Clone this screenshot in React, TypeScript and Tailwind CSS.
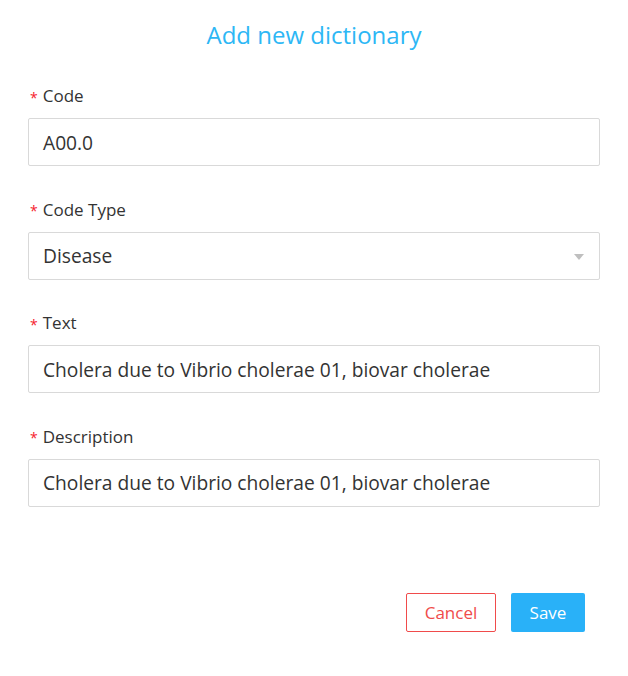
import React from "react";

const fields = [
  { label: "Code", value: "A00.0" },
  { label: "Code Type", value: "Disease", select: true },
  { label: "Text", value: "Cholera due to Vibrio cholerae 01, biovar cholerae" },
  { label: "Description", value: "Cholera due to Vibrio cholerae 01, biovar cholerae" },
];

const App: React.FC = () => {
  return (
    <div
      className="w-[628px] h-[676px] bg-white px-[28px] pt-[19px]"
      style={{ fontFamily: '"Open Sans", "Noto Sans", sans-serif' }}
    >
      <h1 className="text-center text-[24px] leading-[31px] text-[#2db7f5]">Add new dictionary</h1>

      <div className="mt-[34px] flex flex-col gap-[31.6px]">
        {fields.map((f) => (
          <div key={f.label} className="flex flex-col gap-[10px]">
            <label className="flex items-center h-[24px] text-[17px] text-[#333]">
              <span className="text-[#f5222d] text-[14px] ml-[2px] mr-[5px] mt-[2px]">*</span>
              {f.label}
            </label>
            <div className="relative h-[48px] border border-[#d9d9d9] rounded-[2px] flex items-center pl-[14px] pt-[2px] text-[19.2px] text-[#333]">
              {f.value}
              {f.select && (
                <svg
                  className="absolute right-[15px] top-[21px]"
                  width="10"
                  height="6"
                  viewBox="0 0 10 6"
                >
                  <path d="M0 0 L10 0 L5 6 Z" fill="#bfbfbf" />
                </svg>
              )}
            </div>
          </div>
        ))}
      </div>

      <div className="mt-[86px] flex justify-end gap-[15px] pr-[15px]">
        <button className="w-[90px] h-[39px] border border-[#f04b4b] rounded-[2px] text-[#f04b4b] text-[17px]">
          Cancel
        </button>
        <button className="w-[74px] h-[39px] bg-[#29b1f8] rounded-[2px] text-white text-[17px]">
          Save
        </button>
      </div>
    </div>
  );
};

export default App;
